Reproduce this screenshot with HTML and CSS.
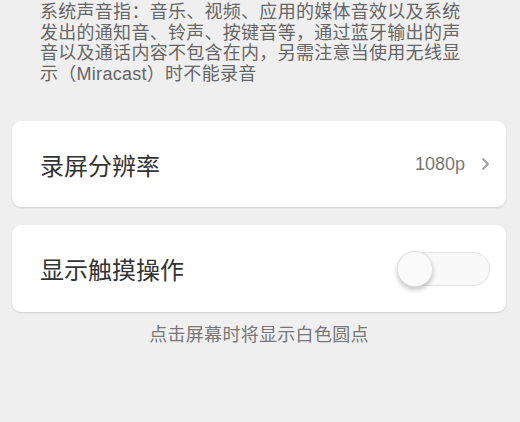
FILE: index.html
```html
<!DOCTYPE html>
<html lang="zh-CN">
<head>
<meta charset="utf-8">
<link rel="stylesheet" href="styles.css">
</head>
<body>
<div class="page">
  <p class="note">系统声音指：音乐、视频、应用的媒体音效以及系统发出的通知音、铃声、按键音等，通过蓝牙输出的声音以及通话内容不包含在内，另需注意当使用无线显示（Miracast）时不能录音</p>
  <div class="card">
    <span class="title">录屏分辨率</span>
    <span class="value">1080p</span>
    <svg class="chev" width="9" height="14" viewBox="0 0 9 14"><path d="M2 2 L7 7 L2 12" fill="none" stroke="#9a9a9a" stroke-width="1.8" stroke-linecap="round" stroke-linejoin="round"/></svg>
  </div>
  <div class="card card2">
    <span class="title">显示触摸操作</span>
    <span class="toggle"><span class="knob"></span></span>
  </div>
  <p class="caption">点击屏幕时将显示白色圆点</p>
</div>
</body>
</html>
```

FILE: styles.css
```css
html, body {
  margin: 0;
  padding: 0;
  background: #efefef;
}
body {
  width: 520px;
  height: 422px;
  overflow: hidden;
  font-family: "Liberation Sans", "Noto Sans CJK SC", sans-serif;
}
.page {
  padding: 0 14px 0 12px;
}
.note {
  margin: 2px 0 0 28px;
  width: 428px;
  font-size: 18px;
  letter-spacing: 0.28px;
  line-height: 20.5px;
  color: #666;
}
.card {
  margin-top: 37px;
  height: 86px;
  background: #fff;
  border-radius: 9px;
  box-shadow: 0 1px 2px rgba(0,0,0,0.14);
  display: flex;
  align-items: center;
  padding: 0 16px 0 28px;
}
.card2 {
  margin-top: 18px;
  height: 87px;
}
.title {
  flex: 1;
  font-size: 24px;
  color: #333;
}
.value {
  font-size: 18px;
  color: #777;
  margin-right: 16px;
}
.chev {
  display: block;
}
.toggle {
  position: relative;
  width: 90px;
  height: 32px;
  border: 1px solid #e4e4e4;
  border-radius: 17px;
  background: #f9f9f9;
  margin-right: 0;
}
.knob {
  position: absolute;
  left: -2px;
  top: -2px;
  width: 34px;
  height: 34px;
  border-radius: 50%;
  background: #fafafa;
  border: 1px solid #e0e0e0;
  box-shadow: 0 3px 5px rgba(0,0,0,0.22);
}
.caption {
  margin: 8px 0 0;
  text-align: center;
  font-size: 18px;
  letter-spacing: 0.3px;
  color: #777;
}
```
